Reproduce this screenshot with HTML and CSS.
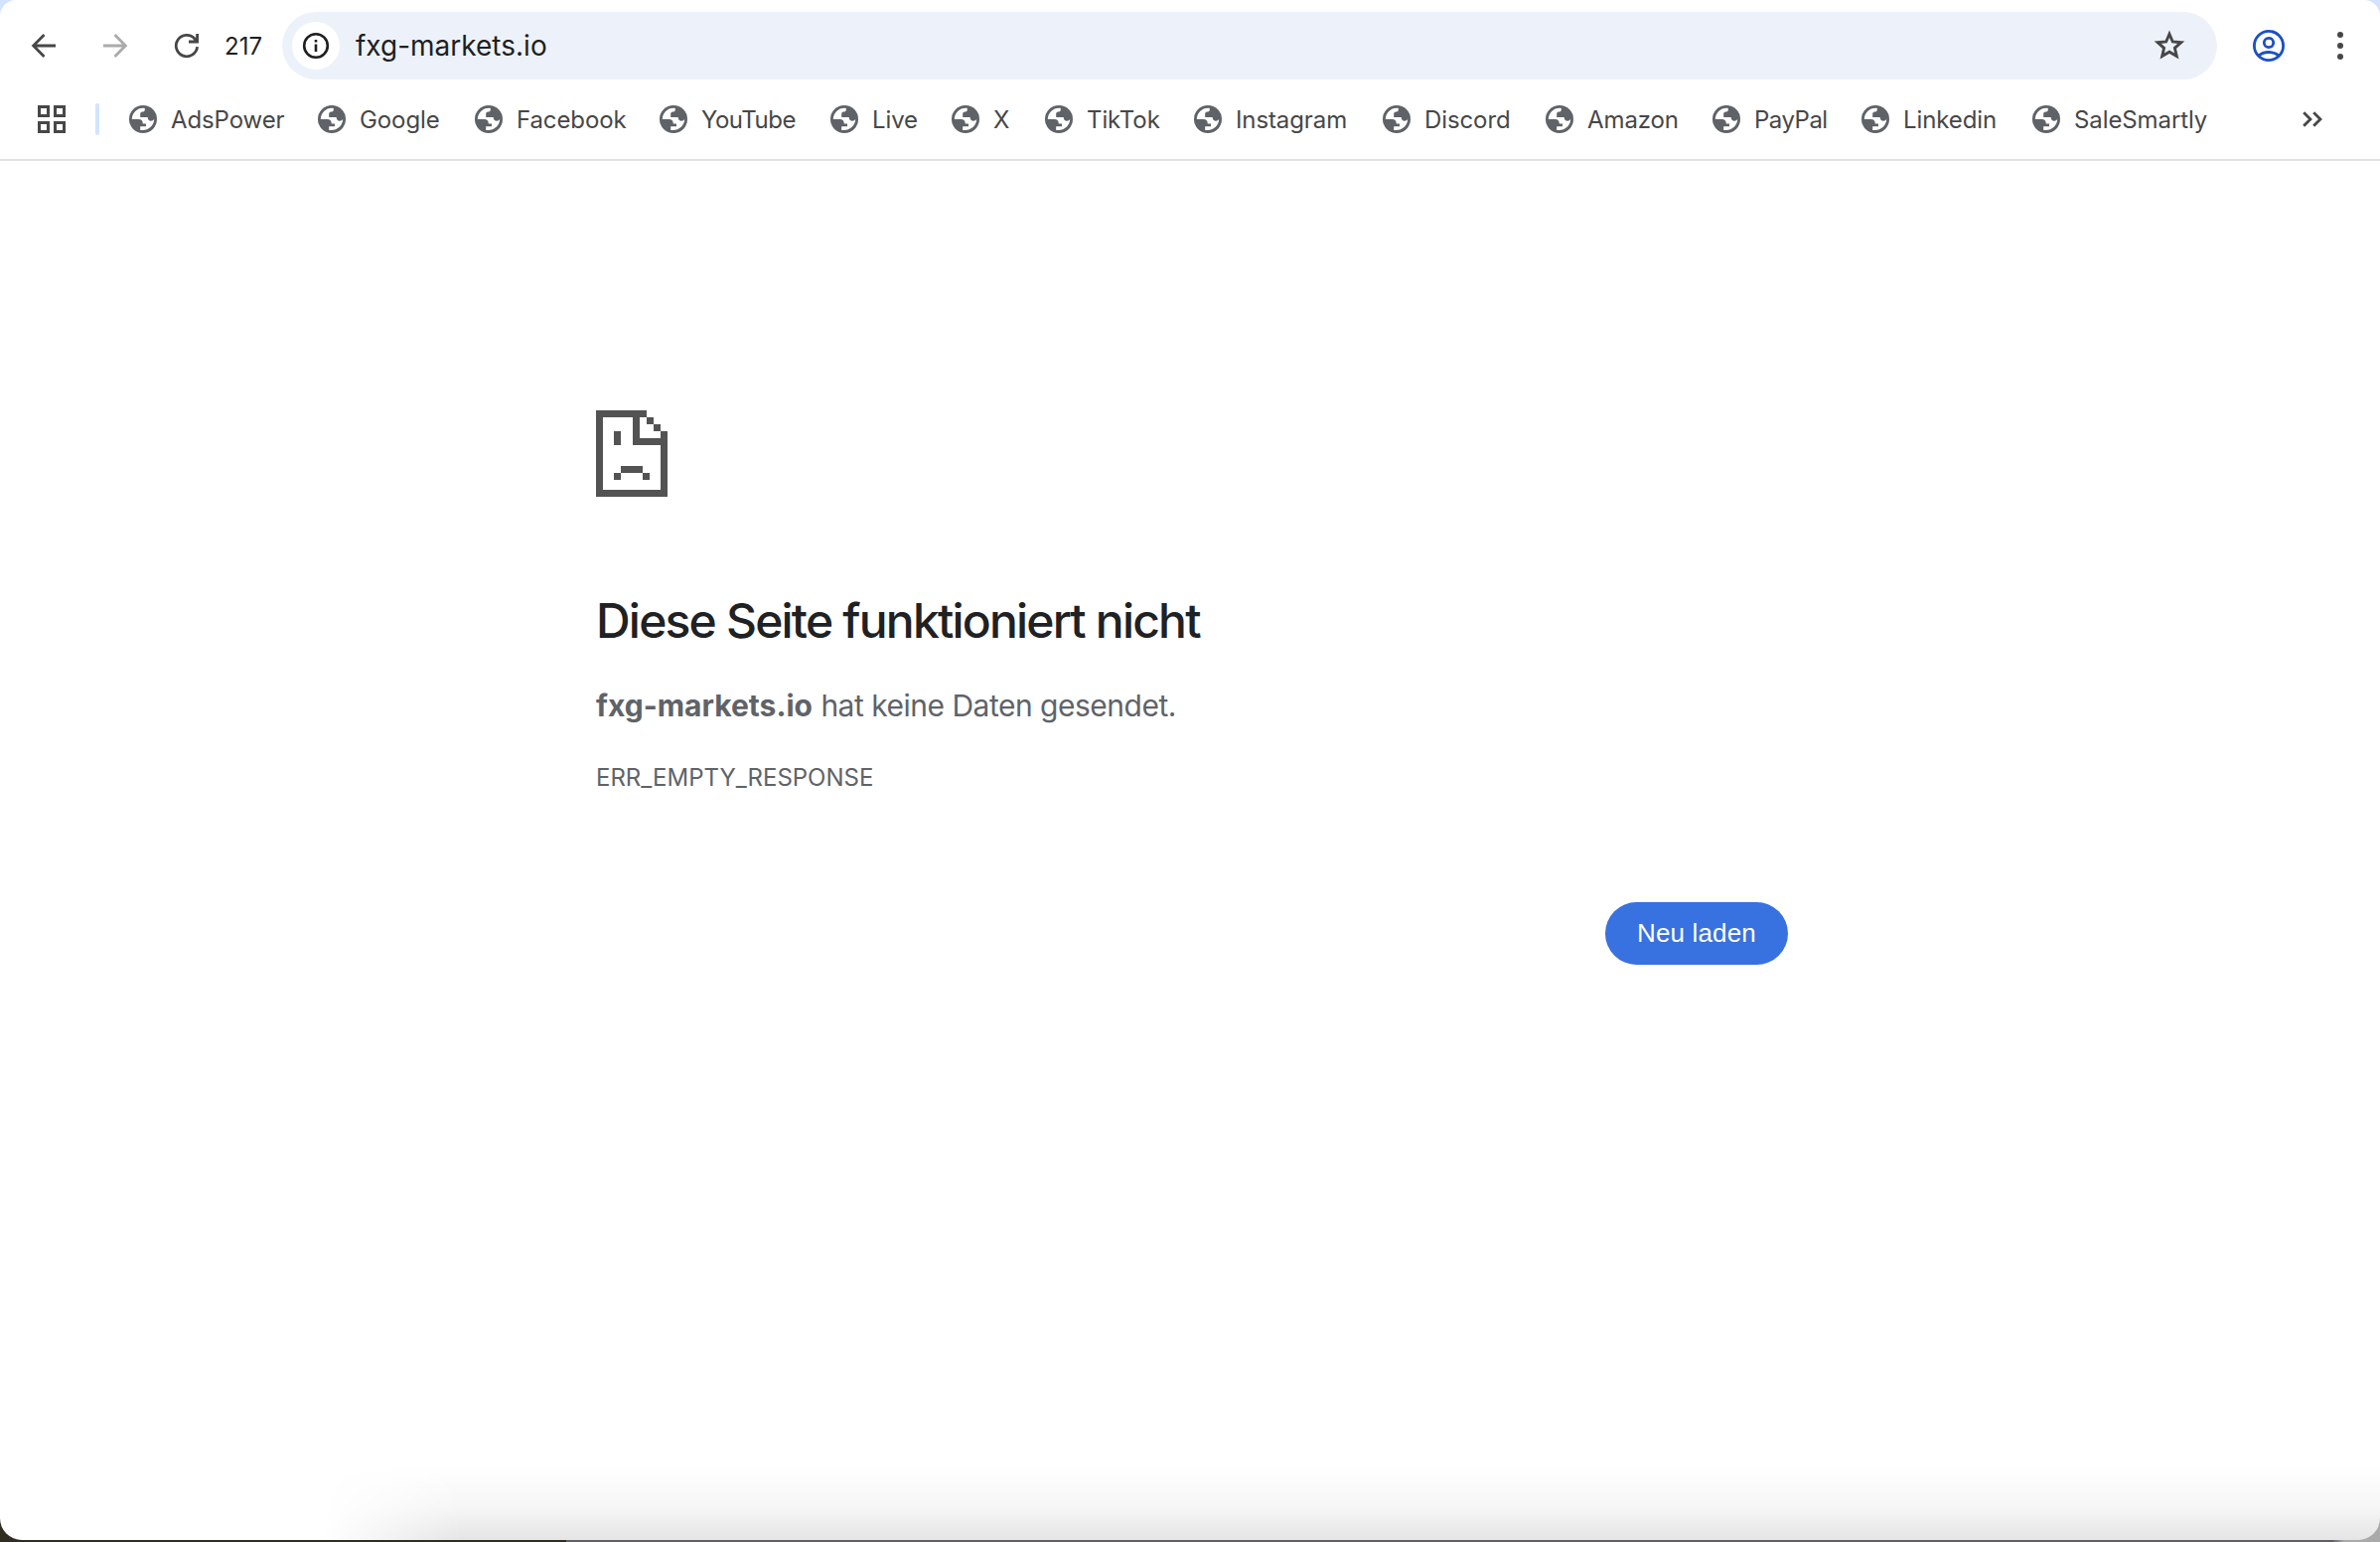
FILE: index.html
```html
<!DOCTYPE html>
<html lang="de">
<head>
    <meta charset="UTF-8">
    <meta name="viewport" content="width=device-width, initial-scale=1.0">
    <title>fxg-markets.io</title>
    <link rel="stylesheet" href="styles.css">
</head>
<body>

    <!-- Shared icon for bookmarks without a favicon -->
    <svg class="sprite" aria-hidden="true">
        <symbol id="globe" viewBox="0 0 28 28">
            <circle cx="14" cy="14" r="14"/>
            <path fill="#fff" d="M15.800 2.900C8.600 2 3.100 7.200 2.800 14H9.500C12 14 13.800 15.500 13.800 18.400H17V21.200H11.200V24.900C18.500 26.300 25.300 21 25.200 13.600C24.700 15.200 23.200 16 21.500 15.800C19.600 15.600 18.800 14.300 18.700 12.100H11.200V8.400C11.200 6.900 12.600 6.500 14 6.500C15.500 6.400 16 4.900 15.800 2.900Z"/>
        </symbol>
    </svg>

    <div class="window">
        <!-- Toolbar -->
        <header class="toolbar">
            <svg class="nav-icon back" viewBox="0 0 28 28"><path d="M26 14H4M14.500 3L3.600 14L14.500 25"/></svg>
            <svg class="nav-icon forward" viewBox="0 0 28 28"><path d="M2 14H24M13.500 3L24.400 14L13.500 25"/></svg>
            <svg class="nav-icon reload" viewBox="0 0 28 28"><path d="M24.600 15.200A10.700 10.700 0 1 1 22 7L24 10M24.600 2V10H16"/></svg>
            <span class="profile-number">217</span>
            <div class="omnibox">
                <span class="site-info">
                    <svg viewBox="0 0 28 28"><circle cx="14" cy="14" r="11.800"/><path d="M14 12.500V20M14 8V10.500"/></svg>
                </span>
                <span class="url">fxg-markets.io</span>
                <svg class="star" viewBox="0 0 32 32"><path d="M16 4.200L19.300 12L27.800 12.700L21.400 18.300L23.300 26.600L16 22.200L8.700 26.600L10.600 18.300L4.200 12.700L12.700 12Z"/></svg>
            </div>
            <svg class="profile" viewBox="0 0 32 32"><circle cx="16" cy="16" r="14.600"/><circle cx="16" cy="13" r="4.700"/><path d="M6 26C11 21.300 21 21.300 26 26"/></svg>
            <svg class="menu" viewBox="0 0 8 30"><circle cx="4" cy="4" r="3"/><circle cx="4" cy="15" r="3"/><circle cx="4" cy="26" r="3"/></svg>
        </header>

        <!-- Bookmarks -->
        <nav class="bookmarks">
            <svg class="apps" viewBox="0 0 28 28"><path d="M1.500 1.500H10.500V10.500H1.500ZM17.500 1.500H26.500V10.500H17.500ZM1.500 17.500H10.500V26.500H1.500ZM17.500 17.500H26.500V26.500H17.500Z"/></svg>
            <span class="divider"></span>
            <div class="bookmark-list">
                <a class="bookmark"><svg><use href="#globe"/></svg>AdsPower</a>
                <a class="bookmark"><svg><use href="#globe"/></svg>Google</a>
                <a class="bookmark"><svg><use href="#globe"/></svg>Facebook</a>
                <a class="bookmark tight"><svg><use href="#globe"/></svg>YouTube</a>
                <a class="bookmark"><svg><use href="#globe"/></svg>Live</a>
                <a class="bookmark"><svg><use href="#globe"/></svg>X</a>
                <a class="bookmark"><svg><use href="#globe"/></svg>TikTok</a>
                <a class="bookmark"><svg><use href="#globe"/></svg>Instagram</a>
                <a class="bookmark"><svg><use href="#globe"/></svg>Discord</a>
                <a class="bookmark"><svg><use href="#globe"/></svg>Amazon</a>
                <a class="bookmark tight"><svg><use href="#globe"/></svg>PayPal</a>
                <a class="bookmark"><svg><use href="#globe"/></svg>Linkedin</a>
                <a class="bookmark"><svg><use href="#globe"/></svg>SaleSmartly</a>
            </div>
            <svg class="more" viewBox="0 0 20 16"><path d="M1.200 1.200L8 8L1.200 14.800M11.200 1.200L18 8L11.200 14.800"/></svg>
        </nav>

        <!-- Error page -->
        <main class="error-page">
            <svg class="sad-page" viewBox="0 0 72 87"><path d="M0 0H51V7H44V28H65V21H72V87H0ZM7 7V80H65V35H37V7ZM51 7H58V14H51ZM58 14H65V21H58ZM18 21H25V35H18ZM25 56H47V63H25ZM18 63H25V70H18ZM47 63H54V70H47Z"/></svg>
            <h1>Diese Seite funktioniert nicht</h1>
            <p class="message"><strong>fxg-markets.io</strong> <span>hat keine Daten gesendet.</span></p>
            <p class="error-code">ERR_EMPTY_RESPONSE</p>
            <button type="button" class="reload-button">Neu laden</button>
        </main>
        <div class="dock-shadow"></div>
    </div>

</body>
</html>
```

FILE: styles.css
```css
* {
    box-sizing: border-box;
}

body {
    margin: 0;
    height: 1552px;
    overflow: hidden;
    font-family: Inter, sans-serif;
    background: linear-gradient(#d3e3fd, #d3e3fd) top / 100% 40px no-repeat,
        linear-gradient(90deg, #302e20 570px, #625e66 570px, #625e66 2348px, #aaa 2360px);
}

svg {
    display: block;
    flex: none;
    fill: none;
}

.sprite {
    position: absolute;
    width: 0;
    height: 0;
}

.window {
    position: relative;
    display: flex;
    flex-direction: column;
    height: 1550px;
    overflow: hidden;
    background: #fff;
    border-radius: 16px 16px 22px 22px;
}

/* Toolbar */
.toolbar {
    display: flex;
    align-items: center;
    height: 92px;
    padding: 0 36px 0 30px;
    color: #1f1f1f;
}

.nav-icon {
    width: 28px;
    height: 28px;
    margin-right: 44px;
    stroke: #474747;
    stroke-width: 2.8;
}

.forward {
    stroke: #ababab;
}

.reload {
    margin-right: 24px;
}

.profile-number {
    width: 58px;
    font-size: 24px;
    white-space: nowrap;
}

.omnibox {
    display: flex;
    align-items: center;
    width: 1948px;
    height: 68px;
    padding: 0 32px 0 10px;
    border-radius: 34px;
    background: #edf2fa;
}

.site-info {
    display: flex;
    align-items: center;
    justify-content: center;
    width: 48px;
    height: 48px;
    border-radius: 50%;
    background: #fff;
}

.site-info svg {
    width: 28px;
    height: 28px;
    stroke: #1f1f1f;
    stroke-width: 2.6;
}

.url {
    margin-left: 16px;
    font-size: 28px;
}

.star {
    width: 32px;
    height: 32px;
    margin-left: auto;
    stroke: #474747;
    stroke-width: 2.9;
}

.profile {
    width: 32px;
    height: 32px;
    margin-left: 36px;
    stroke: #1b50c4;
    stroke-width: 2.8;
}

.menu {
    width: 8px;
    height: 30px;
    margin-left: auto;
    fill: #474747;
}

/* Bookmarks */
.bookmarks {
    display: flex;
    align-items: center;
    height: 70px;
    padding: 0 58px 12px 38px;
    border-bottom: 2px solid #e1e1e1;
}

.apps {
    width: 28px;
    height: 28px;
    stroke: #474747;
    stroke-width: 3;
}

.divider {
    width: 4px;
    height: 32px;
    margin: 0 30px;
    border-radius: 2px;
    background: #d3e3fd;
}

.bookmark-list {
    display: grid;
    grid-template-columns: 190px 158px 186px 172px 122px 94px 150px 190px 164px 168px 150px 172px auto;
}

.bookmark {
    display: flex;
    align-items: center;
    gap: 14px;
    font-size: 24px;
    letter-spacing: -0.1px;
    color: #474747;
    white-space: nowrap;
}

.tight {
    letter-spacing: -0.5px;
}

.bookmark svg {
    width: 28px;
    height: 28px;
    fill: #5f6368;
}

.more {
    width: 20px;
    height: 16px;
    margin-left: auto;
    stroke: #474747;
    stroke-width: 2.8;
}

/* Error page */
.error-page {
    display: flex;
    flex-direction: column;
    width: 1200px;
    margin: 251px 0 0 600px;
    color: #5f6368;
}

.sad-page {
    width: 72px;
    height: 87px;
    fill: #535353;
    fill-rule: evenodd;
}

h1 {
    margin: 96px 0 0;
    font-size: 48px;
    font-weight: 500;
    line-height: 58px;
    letter-spacing: -1.8px;
    color: #202124;
    white-space: nowrap;
}

.message {
    margin: 32px 0 0;
    font-size: 30px;
    line-height: 48px;
    white-space: nowrap;
}

.message span {
    letter-spacing: -0.5px;
}

.error-code {
    margin: 31px 0 0;
    font-size: 24px;
    line-height: 36px;
}

.reload-button {
    align-self: flex-end;
    width: 184px;
    height: 63px;
    margin-top: 107px;
    border: none;
    border-radius: 32px;
    font-family: "Liberation Sans", sans-serif;
    font-size: 26px;
    letter-spacing: 0.15px;
    color: #fff;
    background: #3871e0;
    cursor: pointer;
}

/* Soft shade along the lower window edge */
.dock-shadow {
    position: absolute;
    left: 325px;
    right: 0;
    bottom: 0;
    height: 74px;
    background: linear-gradient(rgba(0, 0, 0, 0), rgba(0, 0, 0, 0.035) 55%, rgba(0, 0, 0, 0.1));
    mask-image: linear-gradient(90deg, transparent, #000 140px);
}
```
